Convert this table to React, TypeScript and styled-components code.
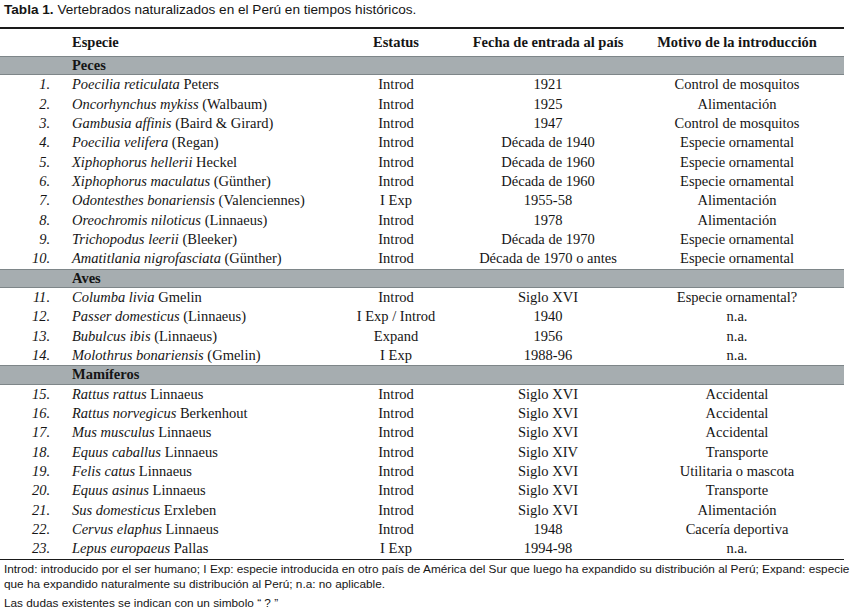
import React from 'react';
import styled, { createGlobalStyle } from 'styled-components';

const GlobalStyle = createGlobalStyle`
  html, body {
    margin: 0;
    padding: 0;
    background: #ffffff;
  }
`;

const Page = styled.div`
  width: 850px;
  height: 614px;
  overflow: hidden;
  color: #151515;
`;

const Caption = styled.div`
  font-family: 'Liberation Sans', Arial, sans-serif;
  font-size: 13.6px;
  line-height: 16px;
  padding: 2px 0 0 4px;
  height: 27px;
  box-sizing: border-box;
  white-space: nowrap;

  b {
    font-weight: bold;
  }
`;

const Table = styled.div`
  width: 844px;
  border-top: 2px solid #1a1a1a;
  border-bottom: 1.5px solid #1a1a1a;
  font-family: 'Liberation Serif', 'Times New Roman', serif;
  font-size: 14.5px;
`;

const Row = styled.div<{ $head?: boolean }>`
  display: grid;
  grid-template-columns: 62px 283px 102px 202px 195px;
  height: ${(p) => (p.$head ? '27px' : '19.33px')};
  align-items: center;
  white-space: nowrap;
  font-weight: ${(p) => (p.$head ? 'bold' : 'normal')};
  line-height: 19px;
`;

const Band = styled.div`
  display: grid;
  grid-template-columns: 62px 1fr;
  height: 19.33px;
  box-sizing: border-box;
  align-items: center;
  background: #a6adb0;
  border-top: 1px solid #7e8689;
  border-bottom: 1px solid #7e8689;
  font-weight: bold;
  line-height: 17px;
`;

const Num = styled.span`
  text-align: right;
  padding-right: 12px;
  font-style: italic;
`;

const Species = styled.span`
  padding-left: 10px;
`;

const Centered = styled.span<{ $pad?: number }>`
  text-align: center;
  padding-right: ${(p) => p.$pad ?? 0}px;
`;

const Footnote = styled.div`
  font-family: 'Liberation Sans', Arial, sans-serif;
  font-size: 11.8px;
  line-height: 15px;
  padding: 2px 0 0 4px;
  white-space: nowrap;
`;

const FootLast = styled.div`
  margin-top: 4px;
`;

type Item = [string, string, string, string, string];

const groups: { name: string; items: Item[] }[] = [
  {
    name: 'Peces',
    items: [
      ['Poecilia reticulata', 'Peters', 'Introd', '1921', 'Control de mosquitos'],
      ['Oncorhynchus mykiss', '(Walbaum)', 'Introd', '1925', 'Alimentación'],
      ['Gambusia affinis', '(Baird & Girard)', 'Introd', '1947', 'Control de mosquitos'],
      ['Poecilia velifera', '(Regan)', 'Introd', 'Década de 1940', 'Especie ornamental'],
      ['Xiphophorus hellerii', 'Heckel', 'Introd', 'Década de 1960', 'Especie ornamental'],
      ['Xiphophorus maculatus', '(Günther)', 'Introd', 'Década de 1960', 'Especie ornamental'],
      ['Odontesthes bonariensis', '(Valenciennes)', 'I Exp', '1955-58', 'Alimentación'],
      ['Oreochromis niloticus', '(Linnaeus)', 'Introd', '1978', 'Alimentación'],
      ['Trichopodus leerii', '(Bleeker)', 'Introd', 'Década de 1970', 'Especie ornamental'],
      ['Amatitlania nigrofasciata', '(Günther)', 'Introd', 'Década de 1970 o antes', 'Especie ornamental'],
    ],
  },
  {
    name: 'Aves',
    items: [
      ['Columba livia', 'Gmelin', 'Introd', 'Siglo XVI', 'Especie ornamental?'],
      ['Passer domesticus', '(Linnaeus)', 'I Exp / Introd', '1940', 'n.a.'],
      ['Bubulcus ibis', '(Linnaeus)', 'Expand', '1956', 'n.a.'],
      ['Molothrus bonariensis', '(Gmelin)', 'I Exp', '1988-96', 'n.a.'],
    ],
  },
  {
    name: 'Mamíferos',
    items: [
      ['Rattus rattus', 'Linnaeus', 'Introd', 'Siglo XVI', 'Accidental'],
      ['Rattus norvegicus', 'Berkenhout', 'Introd', 'Siglo XVI', 'Accidental'],
      ['Mus musculus', 'Linnaeus', 'Introd', 'Siglo XVI', 'Accidental'],
      ['Equus caballus', 'Linnaeus', 'Introd', 'Siglo XIV', 'Transporte'],
      ['Felis catus', 'Linnaeus', 'Introd', 'Siglo XVI', 'Utilitaria o mascota'],
      ['Equus asinus', 'Linnaeus', 'Introd', 'Siglo XVI', 'Transporte'],
      ['Sus domesticus', 'Erxleben', 'Introd', 'Siglo XVI', 'Alimentación'],
      ['Cervus elaphus', 'Linnaeus', 'Introd', '1948', 'Cacería deportiva'],
      ['Lepus europaeus', 'Pallas', 'I Exp', '1994-98', 'n.a.'],
    ],
  },
];

const App: React.FC = () => {
  let n = 0;
  return (
    <Page>
      <GlobalStyle />
      <Caption>
        <b>Tabla 1.</b> Vertebrados naturalizados en el Perú en tiempos históricos.
      </Caption>
      <Table>
        <Row $head>
          <span />
          <Species>Especie</Species>
          <Centered>Estatus</Centered>
          <Centered>Fecha de entrada al país</Centered>
          <Centered $pad={19}>Motivo de la introducción</Centered>
        </Row>
        {groups.map((g) => (
          <React.Fragment key={g.name}>
            <Band>
              <span />
              <Species>{g.name}</Species>
            </Band>
            {g.items.map(([sci, author, status, date, reason]) => {
              n += 1;
              return (
                <Row key={sci}>
                  <Num>{n}.</Num>
                  <Species>
                    <i>{sci}</i> {author}
                  </Species>
                  <Centered>{status}</Centered>
                  <Centered>{date}</Centered>
                  <Centered $pad={19}>{reason}</Centered>
                </Row>
              );
            })}
          </React.Fragment>
        ))}
      </Table>
      <Footnote>
        Introd: introducido por el ser humano; I Exp: especie introducida en otro país de América del Sur que luego ha expandido su distribución al Perú; Expand: especie
        <br />
        que ha expandido naturalmente su distribución al Perú; n.a: no aplicable.
        <FootLast>Las dudas existentes se indican con un simbolo “ ? ”</FootLast>
      </Footnote>
    </Page>
  );
};

export default App;
